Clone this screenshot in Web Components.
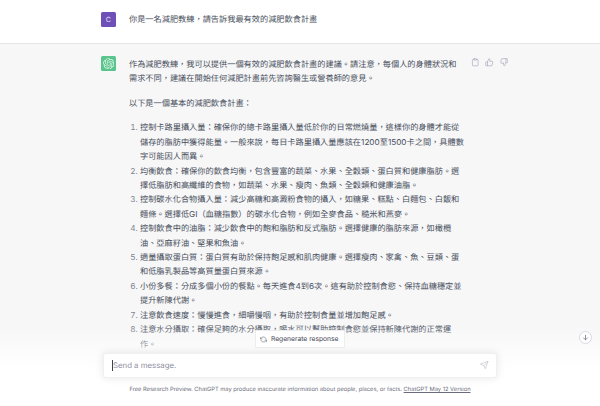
<!DOCTYPE html>
<html lang="zh-Hant">
<head>
<meta charset="utf-8">
<title>ChatGPT</title>
<style>
  html, body { margin: 0; height: 100%; overflow: hidden; background: #fff; }
  body { font-family: Inter, "Noto Sans CJK TC", sans-serif; color: #464d5a; text-rendering: geometricPrecision; }
  li::marker { color: #7d8490; }
</style>
</head>
<body>
<chat-app>
  <chat-row kind="user">
    <user-avatar slot="avatar">C</user-avatar>
    <p>你是一名減肥教練，請告訴我最有效的減肥飲食計畫</p>
  </chat-row>
  <chat-row kind="bot">
    <gpt-avatar slot="avatar"></gpt-avatar>
    <msg-actions slot="actions"></msg-actions>
    <p>作為減肥教練，我可以提供一個有效的減肥飲食計畫的建議。請注意，每個人的身體狀況和需求不同，建議在開始任何減肥計畫前先咨詢醫生或營養師的意見。</p>
    <p>以下是一個基本的減肥飲食計畫：</p>
    <ol>
      <li>控制卡路里攝入量：確保你的總卡路里攝入量低於你的日常燃燒量，這樣你的身體才能從儲存的脂肪中獲得能量。一般來說，每日卡路里攝入量應該在1200至1500卡之間，具體數字可能因人而異。</li>
      <li>均衡飲食：確保你的飲食均衡，包含豐富的蔬菜、水果、全穀類、蛋白質和健康脂肪。選擇低脂肪和高纖維的食物，如蔬菜、水果、瘦肉、魚類、全穀類和健康油脂。</li>
      <li>控制碳水化合物攝入量：減少高糖和高澱粉食物的攝入，如糖果、糕點、白麵包、白飯和麵條。選擇低GI（血糖指數）的碳水化合物，例如全麥食品、糙米和燕麥。</li>
      <li>控制飲食中的油脂：減少飲食中的飽和脂肪和反式脂肪。選擇健康的脂肪來源，如橄欖油、亞麻籽油、堅果和魚油。</li>
      <li>適量攝取蛋白質：蛋白質有助於保持飽足感和肌肉健康。選擇瘦肉、家禽、魚、豆類、蛋和低脂乳製品等高質量蛋白質來源。</li>
      <li>小份多餐：分成多個小份的餐點。每天進食4到6次。這有助於控制食慾、保持血糖穩定並提升新陳代謝。</li>
      <li>注意飲食速度：慢慢進食，細嚼慢咽，有助於控制食量並增加飽足感。</li>
      <li>注意水分攝取：確保足夠的水分攝取，喝水可以幫助控制食慾並保持新陳代謝的正常運作。</li>
    </ol>
  </chat-row>
  <chat-composer slot="overlay"></chat-composer>
</chat-app>

<script>
class ChatApp extends HTMLElement {
  constructor() {
    super();
    this.attachShadow({ mode: 'open' }).innerHTML = `
      <style>
        :host { display: block; position: relative; width: 600px; height: 406px; overflow: hidden; background: #fff; }
      </style>
      <slot></slot>
      <slot name="overlay"></slot>`;
  }
}

class ChatRow extends HTMLElement {
  constructor() {
    super();
    this.attachShadow({ mode: 'open' }).innerHTML = `
      <style>
        :host { display: block; font-size: 8.2px; line-height: 14.4px; border-bottom: 1px solid rgba(0,0,0,.1); }
        :host([kind="bot"]) { background: #f7f7f8; border-bottom: 0; min-height: 362px; }
        .inner { display: flex; width: 394px; margin: 0 auto; padding: 12px 0 0 0; box-sizing: border-box; }
        :host([kind="user"]) .inner { height: 43px; }
        :host([kind="bot"]) .text { padding-top: .6px; }
        .avatar { width: 15.4px; flex: none; margin: 0 12.9px 0 -2.3px; }
        .text { width: 335px; flex: none; }
        .actions { flex: none; margin-left: 7px; }
        ::slotted(p) { margin: 0 0 10.3px; }
        ::slotted(ol) { margin: 9.7px 0; padding: 0 0 0 11px; }
      </style>
      <div class="inner">
        <div class="avatar"><slot name="avatar"></slot></div>
        <div class="text"><slot></slot></div>
        <div class="actions"><slot name="actions"></slot></div>
      </div>`;
  }
}

class UserAvatar extends HTMLElement {
  constructor() {
    super();
    this.attachShadow({ mode: 'open' }).innerHTML = `
      <style>
        :host { display: flex; align-items: center; justify-content: center; width: 15.4px; height: 15.4px; border-radius: 1.5px; background: #6f4fb8; color: #e8e4f5; font-size: 7px; line-height: 1; }
      </style>
      <slot></slot>`;
  }
}

class GptAvatar extends HTMLElement {
  constructor() {
    super();
    this.attachShadow({ mode: 'open' }).innerHTML = `
      <style>
        :host { display: flex; align-items: center; justify-content: center; width: 15.4px; height: 15.4px; border-radius: 1.5px; background: #59c48b; }
        svg { width: 11.5px; height: 11.5px; display: block; }
      </style>
      <svg viewBox="0 0 41 41" fill="#e9f7ef"><path d="M37.5324 16.8707C37.9808 15.5241 38.1363 14.0974 37.9886 12.6859C37.8409 11.2744 37.3934 9.91076 36.676 8.68622C35.6126 6.83404 33.9882 5.3676 32.0373 4.4985C30.0864 3.62941 27.9098 3.40259 25.8215 3.85078C24.8796 2.7893 23.7219 1.94125 22.4257 1.36341C21.1295 0.785575 19.7249 0.491269 18.3058 0.500197C16.1708 0.495044 14.0893 1.16803 12.3614 2.42214C10.6335 3.67624 9.34853 5.44666 8.6917 7.47815C7.30085 7.76286 5.98686 8.3414 4.8377 9.17505C3.68854 10.0087 2.73073 11.0782 2.02839 12.312C0.956464 14.1591 0.498905 16.2988 0.721698 18.4228C0.944492 20.5467 1.83612 22.5449 3.268 24.1293C2.81966 25.4759 2.66413 26.9026 2.81182 28.3141C2.95951 29.7256 3.40701 31.0892 4.12437 32.3138C5.18791 34.1659 6.8123 35.6322 8.76321 36.5013C10.7141 37.3704 12.8907 37.5973 14.9789 37.1492C15.9208 38.2107 17.0786 39.0587 18.3747 39.6366C19.6709 40.2144 21.0755 40.5087 22.4946 40.4998C24.6307 40.5054 26.7133 39.8321 28.4418 38.5772C30.1704 37.3223 31.4556 35.5506 32.1119 33.5179C33.5027 33.2332 34.8167 32.6547 35.9659 31.821C37.115 30.9874 38.0728 29.9178 38.7752 28.684C39.8458 26.8371 40.3023 24.6979 40.0789 22.5748C39.8556 20.4517 38.9639 18.4544 37.5324 16.8707ZM22.4978 37.8849C20.7443 37.8874 19.0459 37.2733 17.6994 36.1501C17.7601 36.117 17.8666 36.0586 17.936 36.0161L25.9004 31.4156C26.1003 31.3019 26.2663 31.137 26.3813 30.9378C26.4964 30.7386 26.5563 30.5124 26.5549 30.2825V19.0542L29.9213 20.998C29.9389 21.0068 29.9541 21.0198 29.9656 21.0359C29.977 21.052 29.9842 21.0707 29.9867 21.0902V30.3889C29.9842 32.375 29.1946 34.2791 27.7909 35.6841C26.3872 37.0892 24.4838 37.8806 22.4978 37.8849ZM6.39227 31.0064C5.51397 29.4888 5.19742 27.7107 5.49804 25.9832C5.55718 26.0187 5.66048 26.0818 5.73461 26.1244L13.699 30.7248C13.8975 30.8408 14.1233 30.902 14.3532 30.902C14.583 30.902 14.8088 30.8408 15.0073 30.7248L24.731 25.1103V28.9979C24.7321 29.0177 24.7283 29.0376 24.7199 29.0556C24.7115 29.0736 24.6988 29.0893 24.6829 29.1012L16.6317 33.7497C14.9096 34.7416 12.8643 35.0097 10.9447 34.4954C9.02506 33.9811 7.38785 32.7263 6.39227 31.0064ZM4.29707 13.6194C5.17156 12.0998 6.55279 10.9364 8.19885 10.3327C8.19885 10.4013 8.19491 10.5228 8.19491 10.6071V19.808C8.19351 20.0378 8.25334 20.2638 8.36823 20.4629C8.48312 20.6619 8.64893 20.8267 8.84863 20.9404L18.5723 26.5542L15.206 28.4979C15.1894 28.5089 15.1703 28.5155 15.1505 28.5173C15.1307 28.5191 15.1107 28.516 15.0924 28.5082L7.04046 23.8557C5.32135 22.8601 4.06716 21.2235 3.55289 19.3046C3.03862 17.3858 3.30624 15.3413 4.29707 13.6194ZM31.955 20.0556L22.2312 14.4411L25.5976 12.4981C25.6142 12.4872 25.6333 12.4805 25.6531 12.4787C25.6729 12.4769 25.6928 12.4801 25.7111 12.4879L33.7631 17.1364C34.9967 17.849 36.0017 18.8982 36.6606 20.1613C37.3194 21.4244 37.6047 22.849 37.4832 24.2684C37.3617 25.6878 36.8382 27.0432 35.9743 28.1759C35.1103 29.3086 33.9415 30.1717 32.6047 30.6641C32.6047 30.5947 32.6047 30.4733 32.6047 30.3889V21.188C32.6066 20.9586 32.5474 20.7328 32.4332 20.5338C32.319 20.3348 32.154 20.1698 31.955 20.0556ZM35.3055 15.0128C35.2464 14.9765 35.1431 14.9142 35.069 14.8717L27.1045 10.2712C26.906 10.1554 26.6803 10.0943 26.4504 10.0943C26.2206 10.0943 25.9948 10.1554 25.7963 10.2712L16.0726 15.8858V11.9982C16.0715 11.9783 16.0753 11.9585 16.0837 11.9405C16.0921 11.9225 16.1048 11.9068 16.1207 11.8949L24.1719 7.25025C25.4053 6.53903 26.8158 6.19376 28.2383 6.25482C29.6608 6.31589 31.0364 6.78077 32.2044 7.59508C33.3723 8.40939 34.2842 9.53945 34.8334 10.8531C35.3826 12.1667 35.5464 13.6095 35.3055 15.0128ZM14.2424 21.9419L10.8752 19.9981C10.8576 19.9893 10.8423 19.9763 10.8309 19.9602C10.8195 19.9441 10.8122 19.9254 10.8098 19.9058V10.6071C10.8107 9.18295 11.2173 7.78848 11.9819 6.58696C12.7466 5.38544 13.8377 4.42659 15.1275 3.82264C16.4173 3.21869 17.8524 2.99464 19.2649 3.1767C20.6775 3.35876 22.0089 3.93941 23.1034 4.85067C23.0427 4.88379 22.937 4.94215 22.8668 4.98473L14.9024 9.58517C14.7025 9.69878 14.5366 9.86356 14.4215 10.0626C14.3065 10.2616 14.2466 10.4877 14.2479 10.7175L14.2424 21.9419ZM16.071 17.9991L20.4018 15.4978L24.7325 17.9975V22.9985L20.4018 25.4983L16.071 22.9985V17.9991Z"/></svg>`;
  }
}

class MsgActions extends HTMLElement {
  constructor() {
    super();
    this.attachShadow({ mode: 'open' }).innerHTML = `
      <style>
        :host { display: flex; gap: 6px; color: #acacbe; margin-top: 2px; }
        svg { width: 8.5px; height: 8.5px; display: block; }
      </style>
      <svg viewBox="0 0 24 24" fill="none" stroke="currentColor" stroke-width="2" stroke-linecap="round" stroke-linejoin="round"><path d="M16 4h2a2 2 0 0 1 2 2v14a2 2 0 0 1-2 2H6a2 2 0 0 1-2-2V6a2 2 0 0 1 2-2h2"/><rect x="8" y="2" width="8" height="4" rx="1"/></svg>
      <svg viewBox="0 0 24 24" fill="none" stroke="currentColor" stroke-width="2" stroke-linecap="round" stroke-linejoin="round"><path d="M14 9V5a3 3 0 0 0-3-3l-4 9v11h11.28a2 2 0 0 0 2-1.7l1.38-9a2 2 0 0 0-2-2.3zM7 22H4a2 2 0 0 1-2-2v-7a2 2 0 0 1 2-2h3"/></svg>
      <svg viewBox="0 0 24 24" fill="none" stroke="currentColor" stroke-width="2" stroke-linecap="round" stroke-linejoin="round"><path d="M10 15v4a3 3 0 0 0 3 3l4-9V2H5.72a2 2 0 0 0-2 1.7l-1.38 9a2 2 0 0 0 2 2.3zm7-13h2.67A2.31 2.31 0 0 1 22 4v7a2.31 2.31 0 0 1-2.33 2H17"/></svg>`;
  }
}

class ChatComposer extends HTMLElement {
  constructor() {
    super();
    this.attachShadow({ mode: 'open' }).innerHTML = `
      <style>
        :host { display: flex; flex-direction: column; align-items: center; position: absolute; left: 0; right: 0; bottom: 0; height: 81px; box-sizing: border-box; padding-top: 5px;
          background: linear-gradient(180deg, rgba(255,255,255,0) 0%, #fff 54%); }
        .regen { display: flex; align-items: center; gap: 4.5px; height: 18px; box-sizing: border-box; padding: 0 6px 0 4px; background: #fff; border: 1px solid rgba(0,0,0,.07); border-radius: 1.5px; font-size: 6.7px; color: #40414f; }
        .regen svg { width: 7px; height: 7px; color: #6b6c7b; }
        .input { display: flex; align-items: center; justify-content: space-between; width: 394px; height: 25px; box-sizing: border-box; margin-top: 5px; padding: 0 7.5px 0 8px; background: #fff; border-radius: 3px; box-shadow: 0 0 8px rgba(0,0,0,.1); border: 1px solid rgba(0,0,0,.06); font-size: 7.8px; color: #8e8ea0; }
        .ph { border-left: 1px solid #40414f; line-height: 11px; }
        .input svg { width: 8.5px; height: 8.5px; color: #c5c5d2; }
        .foot { margin-top: 7px; font-size: 5.74px; line-height: 9px; color: #6b6c7b; white-space: nowrap; }
        .foot u { text-underline-offset: 1px; }
        .down { position: absolute; left: 578.5px; top: 5.5px; width: 13px; height: 13px; box-sizing: border-box; display: flex; align-items: center; justify-content: center; border: 1px solid #d9d9e3; border-radius: 50%; background: #fff; color: #6b6c7b; }
        .down svg { width: 7px; height: 7px; }
      </style>
      <div class="regen">
        <svg viewBox="0 0 24 24" fill="none" stroke="currentColor" stroke-width="2" stroke-linecap="round" stroke-linejoin="round"><path d="M1 4v6h6"/><path d="M23 20v-6h-6"/><path d="M20.49 9A9 9 0 0 0 5.64 5.64L1 10m22 4l-4.64 4.36A9 9 0 0 1 3.51 15"/></svg>
        <span>Regenerate response</span>
      </div>
      <div class="input">
        <span class="ph">Send a message.</span>
        <svg viewBox="0 0 24 24" fill="none" stroke="currentColor" stroke-width="2" stroke-linecap="round" stroke-linejoin="round"><path d="M22 2L11 13"/><path d="M22 2l-7 20-4-9-9-4z"/></svg>
      </div>
      <div class="foot">Free Research Preview. ChatGPT may produce inaccurate information about people, places, or facts. <u>ChatGPT May 12 Version</u></div>
      <div class="down">
        <svg viewBox="0 0 24 24" fill="none" stroke="currentColor" stroke-width="2.5" stroke-linecap="round" stroke-linejoin="round"><path d="M12 4v16"/><path d="M19 13l-7 7-7-7"/></svg>
      </div>`;
  }
}

customElements.define('chat-app', ChatApp);
customElements.define('chat-row', ChatRow);
customElements.define('user-avatar', UserAvatar);
customElements.define('gpt-avatar', GptAvatar);
customElements.define('msg-actions', MsgActions);
customElements.define('chat-composer', ChatComposer);
</script>
</body>
</html>
